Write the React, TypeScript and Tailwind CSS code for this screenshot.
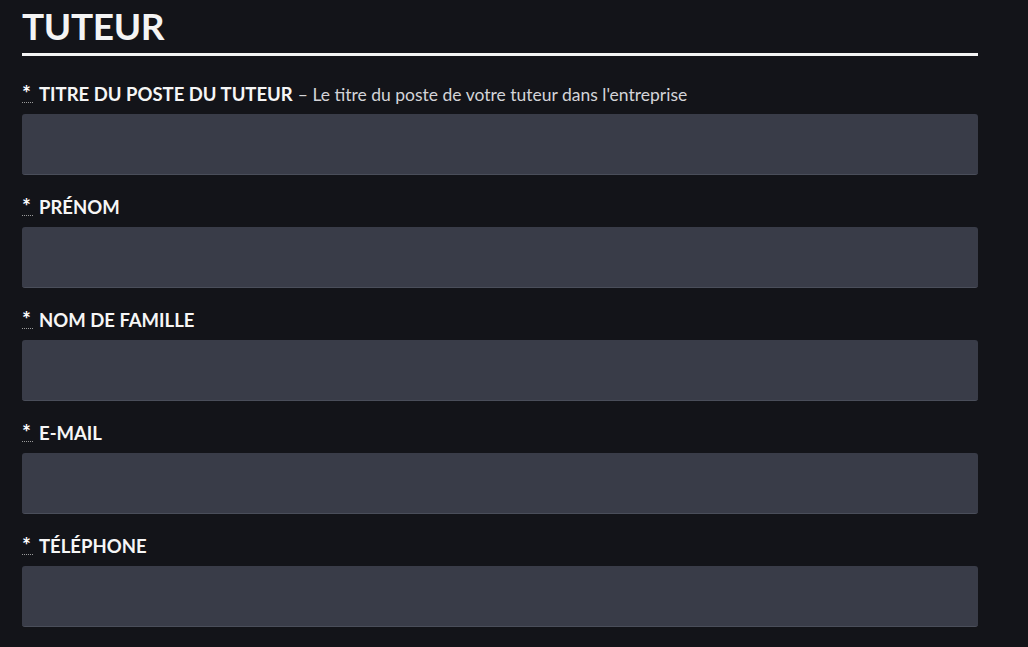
import React from 'react'

const fields = [
    { label: 'TITRE DU POSTE DU TUTEUR', hint: "Le titre du poste de votre tuteur dans l'entreprise" },
    { label: 'PRÉNOM' },
    { label: 'NOM DE FAMILLE' },
    { label: 'E-MAIL' },
    { label: 'TÉLÉPHONE' },
]

export default function App() {
    return (
        <div className="min-h-[647px] bg-[#131419] text-white font-['Lato',sans-serif] pl-[22px] pr-[50px] pt-[2px]">
            <div className="w-[956px]">
                <h1 className="text-[37px] font-bold leading-[48px] tracking-[-0.01em] text-[#f4f4f4]">TUTEUR</h1>
                <div className="h-[3px] bg-[#f4f4f4] mt-[3px]"></div>

                <div className="flex flex-col gap-[20px] mt-[26px]">
                    {fields.map((f) => (
                        <div key={f.label} className="flex flex-col">
                            <label className="flex items-baseline text-[18.5px] leading-[25px] mb-[7px]">
                                <abbr
                                    title="requis"
                                    className="no-underline font-bold text-[21px] w-[11px] border-b border-dotted border-[#9a9a9a] leading-[18px] mr-[6px]"
                                >
                                    *
                                </abbr>
                                <span className="font-bold text-[#f6f6f6]">{f.label}</span>
                                {f.hint && (
                                    <span className="ml-[5px] text-[17.5px] text-[#d4d4d8]">– {f.hint}</span>
                                )}
                            </label>
                            <input
                                type="text"
                                className="h-[61px] w-full rounded-[3px] bg-[#393c48] border-b border-[#4a4e5a] outline-none px-3 text-white"
                            />
                        </div>
                    ))}
                </div>
            </div>
        </div>
    )
}
